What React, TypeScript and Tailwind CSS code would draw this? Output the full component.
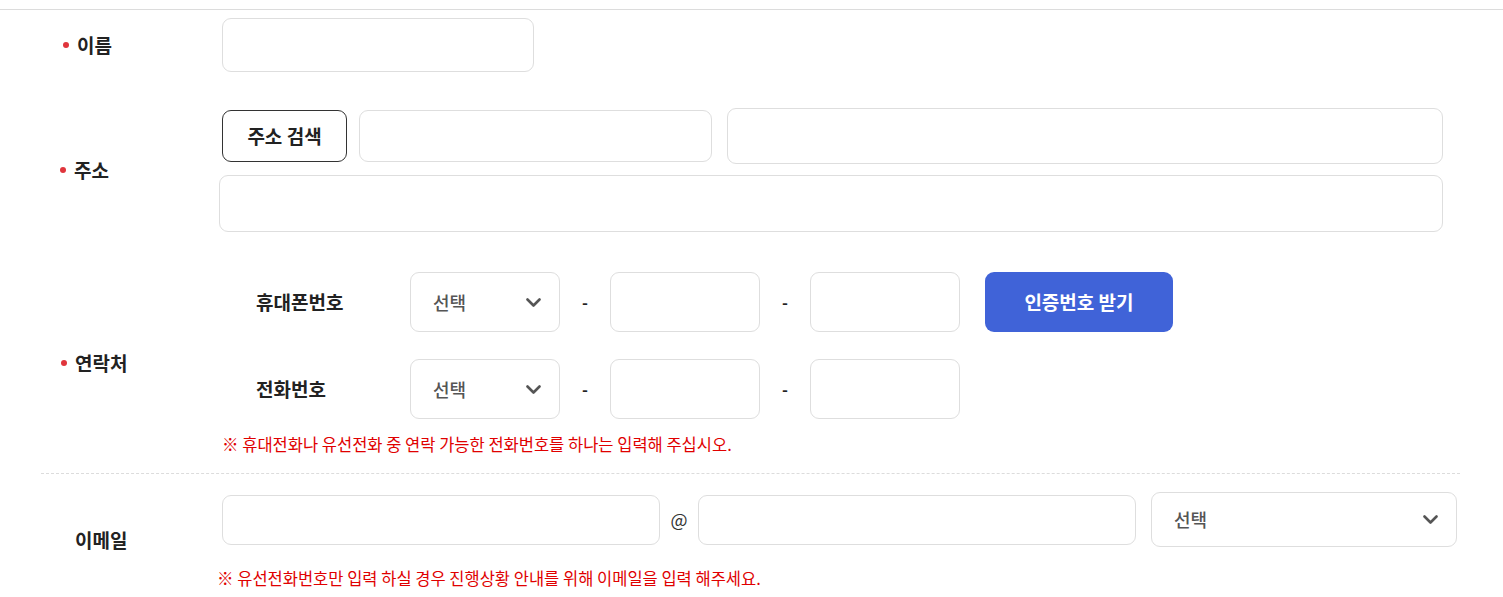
import React from 'react';

const Chevron = () => (
  <svg width="15" height="9" viewBox="0 0 15 9" fill="none">
    <polyline points="1.5,1.5 7.5,7.5 13.5,1.5" stroke="#555" strokeWidth="2.6" strokeLinecap="round" strokeLinejoin="round" />
  </svg>
);

const Bullet = () => <span className="inline-block w-[6px] h-[6px] rounded-full bg-[#e0353c] mr-[8px]" />;

const Select = ({ className }: { className: string }) => (
  <div className={`flex items-center justify-between border border-[#dedede] rounded-[9px] bg-white pl-[22px] pr-[18px] ${className}`}>
    <span className="text-[18px] font-medium text-[#555]">선택</span>
    <Chevron />
  </div>
);

const Box = ({ className }: { className: string }) => (
  <input className={`border border-[#dedede] rounded-[9px] bg-white outline-none ${className}`} />
);

const Dash = () => <div className="w-[50px] text-center text-[16px] font-bold text-[#222]">-</div>;

export default function App() {
  return (
    <div className="min-h-screen bg-white pt-[9px] font-['Noto_Sans_CJK_KR',sans-serif] text-[#222]">
      <div className="border-t border-[#dcdcdc]">
        {/* 이름 */}
        <div className="flex items-center pt-[8px]">
          <div className="w-[222px] pl-[63px] flex items-center text-[19px] font-bold">
            <Bullet />
            이름
          </div>
          <Box className="w-[312px] h-[54px]" />
        </div>

        {/* 주소 */}
        <div className="flex items-center mt-[36px]">
          <div className="w-[222px] pl-[60px] flex items-center text-[19px] font-bold">
            <Bullet />
            주소
          </div>
          <div>
            <div className="flex items-center h-[56px]">
              <button className="w-[125px] h-[52px] border border-[#333] rounded-[9px] text-[19px] font-bold text-[#222]">
                주소 검색
              </button>
              <Box className="ml-[12px] w-[353px] h-[52px]" />
              <Box className="ml-[15px] w-[716px] h-[56px]" />
            </div>
            <Box className="mt-[11px] -ml-[3px] w-[1224px] h-[57px] block" />
          </div>
        </div>

        {/* 연락처 */}
        <div className="flex items-center mt-[40px]">
          <div className="w-[222px] pl-[61px] flex items-center text-[19px] font-bold">
            <Bullet />
            연락처
          </div>
          <div>
            <div className="flex items-center h-[60px]">
              <div className="w-[188px] pl-[34px] text-[19px] font-bold">휴대폰번호</div>
              <Select className="w-[150px] h-[60px]" />
              <Dash />
              <Box className="w-[150px] h-[60px]" />
              <Dash />
              <Box className="w-[150px] h-[60px]" />
              <button className="ml-[25px] w-[188px] h-[60px] rounded-[9px] bg-[#4063d8] text-white text-[19px] font-bold">
                인증번호 받기
              </button>
            </div>
            <div className="flex items-center h-[60px] mt-[27px]">
              <div className="w-[188px] pl-[34px] text-[19px] font-bold">전화번호</div>
              <Select className="w-[150px] h-[60px]" />
              <Dash />
              <Box className="w-[150px] h-[60px]" />
              <Dash />
              <Box className="w-[150px] h-[60px]" />
            </div>
            <p className="mt-[15px] text-[16.5px] leading-[20px] text-[#e00000]">
              ※ 휴대전화나 유선전화 중 연락 가능한 전화번호를 하나는 입력해 주십시오.
            </p>
          </div>
        </div>

        <div className="mx-[41px] w-[1419px] mt-[19px] border-t border-dashed border-[#dcdcdc]" />

        {/* 이메일 */}
        <div className="flex items-center mt-[18px]">
          <div className="w-[222px] pl-[75px] text-[19px] font-bold">이메일</div>
          <div>
            <div className="flex items-center h-[55px]">
              <Box className="w-[438px] h-[50px]" />
              <div className="w-[38px] text-center text-[18px] text-[#333]">@</div>
              <Box className="w-[438px] h-[50px]" />
              <Select className="ml-[15px] w-[306px] h-[55px]" />
            </div>
            <p className="mt-[21px] -ml-[5px] text-[16.5px] leading-[20px] text-[#e00000]">
              ※ 유선전화번호만 입력 하실 경우 진행상황 안내를 위해 이메일을 입력 해주세요.
            </p>
          </div>
        </div>
      </div>
    </div>
  );
}
